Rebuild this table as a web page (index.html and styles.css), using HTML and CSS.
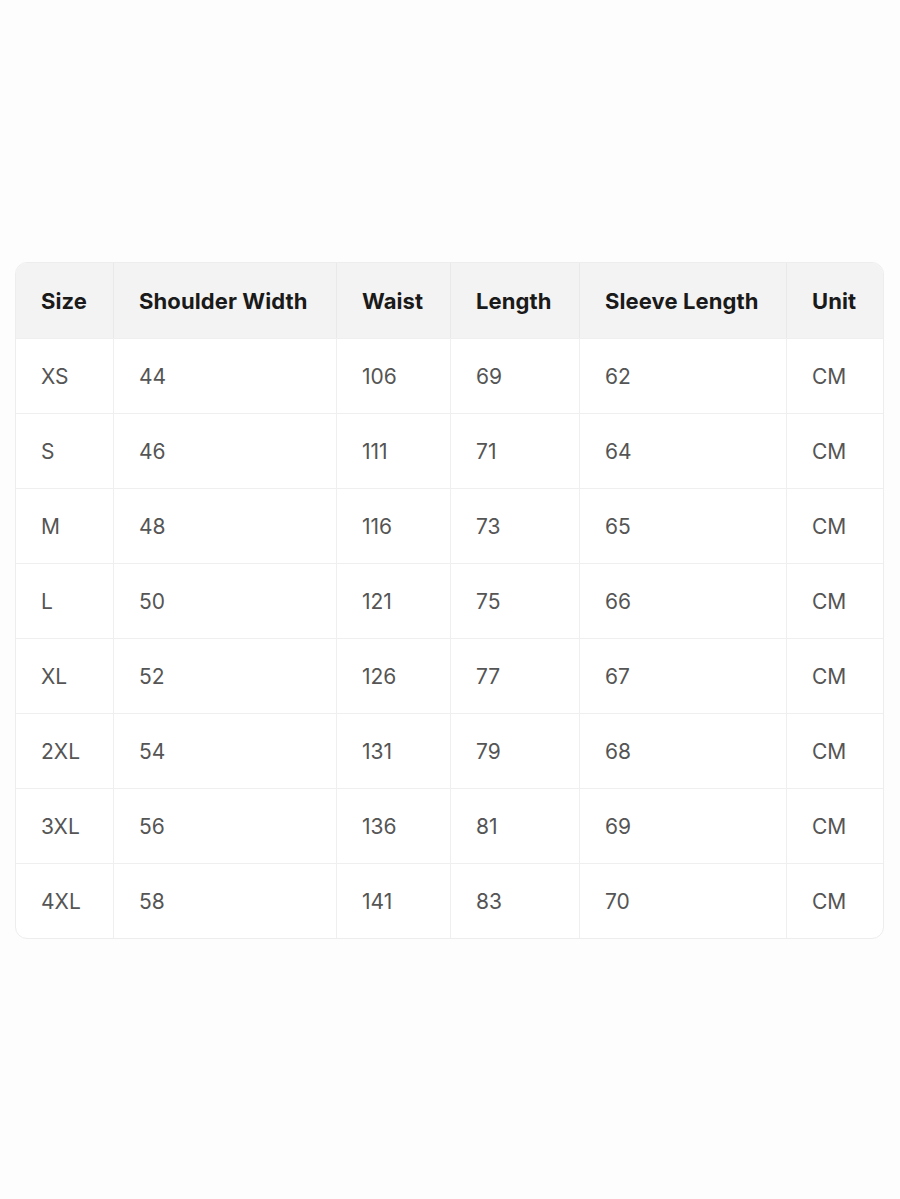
FILE: index.html
```html
<!DOCTYPE html>
<html lang="en">
<head>
<meta charset="utf-8">
<title>Size Chart</title>
<link rel="stylesheet" href="styles.css">
</head>
<body>
<div class="page">
  <div class="chart">
    <div class="row head">
      <div class="cell">Size</div><div class="cell">Shoulder Width</div><div class="cell">Waist</div><div class="cell">Length</div><div class="cell">Sleeve Length</div><div class="cell">Unit</div>
    </div>
    <div class="row"><div class="cell">XS</div><div class="cell">44</div><div class="cell">106</div><div class="cell">69</div><div class="cell">62</div><div class="cell">CM</div></div>
    <div class="row"><div class="cell">S</div><div class="cell">46</div><div class="cell">111</div><div class="cell">71</div><div class="cell">64</div><div class="cell">CM</div></div>
    <div class="row"><div class="cell">M</div><div class="cell">48</div><div class="cell">116</div><div class="cell">73</div><div class="cell">65</div><div class="cell">CM</div></div>
    <div class="row"><div class="cell">L</div><div class="cell">50</div><div class="cell">121</div><div class="cell">75</div><div class="cell">66</div><div class="cell">CM</div></div>
    <div class="row"><div class="cell">XL</div><div class="cell">52</div><div class="cell">126</div><div class="cell">77</div><div class="cell">67</div><div class="cell">CM</div></div>
    <div class="row"><div class="cell">2XL</div><div class="cell">54</div><div class="cell">131</div><div class="cell">79</div><div class="cell">68</div><div class="cell">CM</div></div>
    <div class="row"><div class="cell">3XL</div><div class="cell">56</div><div class="cell">136</div><div class="cell">81</div><div class="cell">69</div><div class="cell">CM</div></div>
    <div class="row"><div class="cell">4XL</div><div class="cell">58</div><div class="cell">141</div><div class="cell">83</div><div class="cell">70</div><div class="cell">CM</div></div>
  </div>
</div>
</body>
</html>
```
FILE: styles.css
```css
html, body {
  margin: 0;
  padding: 0;
  background: #fdfdfd;
}
body {
  font-family: Inter, "Liberation Sans", Arial, sans-serif;
  width: 900px;
  height: 1199px;
  overflow: hidden;
}
.page {
  padding: 262px 0 0 15px;
}
.chart {
  width: 869px;
  border: 1px solid #ededed;
  border-radius: 12px;
  overflow: hidden;
  background: #ffffff;
  box-sizing: border-box;
}
.row {
  display: grid;
  grid-template-columns: 97px 223px 114px 129px 207px 1fr;
  height: 75px;
  border-top: 1px solid #efefef;
  box-sizing: border-box;
}
.row:first-child {
  border-top: none;
}
.cell {
  display: flex;
  align-items: center;
  padding-left: 25px;
  font-size: 21px;
  color: #555555;
  border-left: 1px solid #efefef;
}
.cell:first-child {
  border-left: none;
}
.head {
  background: #f3f3f3;
}
.head .cell {
  font-size: 22px;
  font-weight: 700;
  color: #1a1a1a;
  letter-spacing: 0.1px;
  border-left-color: #e9e9e9;
}
```
